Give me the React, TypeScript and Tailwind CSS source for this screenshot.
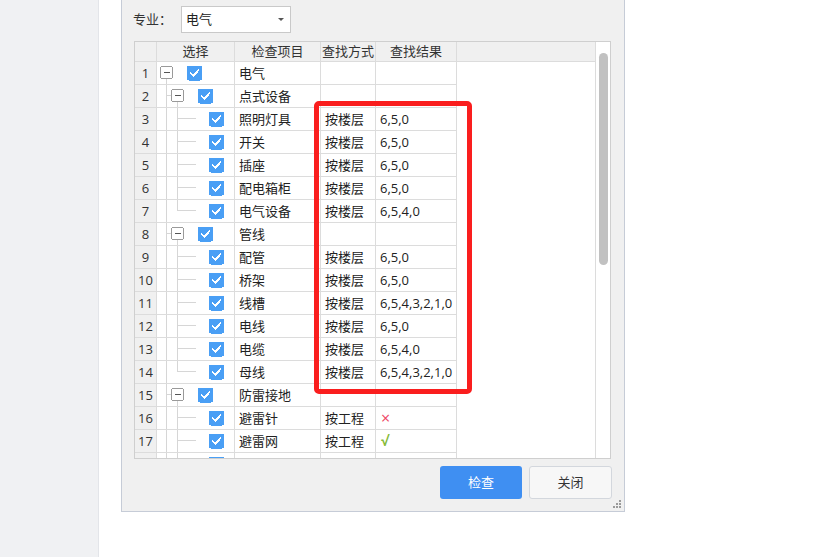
import React from "react";

type Row = {
  n: number;
  level: 0 | 1 | 2;
  name: string;
  method?: string;
  result?: string;
  last?: boolean;
};

const rows: Row[] = [
  { n: 1, level: 0, name: "电气" },
  { n: 2, level: 1, name: "点式设备" },
  { n: 3, level: 2, name: "照明灯具", method: "按楼层", result: "6,5,0" },
  { n: 4, level: 2, name: "开关", method: "按楼层", result: "6,5,0" },
  { n: 5, level: 2, name: "插座", method: "按楼层", result: "6,5,0" },
  { n: 6, level: 2, name: "配电箱柜", method: "按楼层", result: "6,5,0" },
  { n: 7, level: 2, name: "电气设备", method: "按楼层", result: "6,5,4,0", last: true },
  { n: 8, level: 1, name: "管线" },
  { n: 9, level: 2, name: "配管", method: "按楼层", result: "6,5,0" },
  { n: 10, level: 2, name: "桥架", method: "按楼层", result: "6,5,0" },
  { n: 11, level: 2, name: "线槽", method: "按楼层", result: "6,5,4,3,2,1,0" },
  { n: 12, level: 2, name: "电线", method: "按楼层", result: "6,5,0" },
  { n: 13, level: 2, name: "电缆", method: "按楼层", result: "6,5,4,0" },
  { n: 14, level: 2, name: "母线", method: "按楼层", result: "6,5,4,3,2,1,0", last: true },
  { n: 15, level: 1, name: "防雷接地" },
  { n: 16, level: 2, name: "避雷针", method: "按工程", result: "x" },
  { n: 17, level: 2, name: "避雷网", method: "按工程", result: "v" },
];

const LINE = "#d6d6d6";

function Expander({ x }: { x: number }) {
  return (
    <g>
      <rect x={x + 0.5} y={4.5} width={12} height={12} rx={2} fill="#fff" stroke="#9a9a9a" />
      <line x1={x + 4} y1={10.5} x2={x + 10} y2={10.5} stroke="#555" />
    </g>
  );
}

function Check({ x }: { x: number }) {
  return (
    <g>
      <rect x={x} y={3.5} width={15} height={15} rx={2} fill="#4a9ff5" />
      <path
        d={`M${x + 3.8} ${11.2} L${x + 6.6} ${13.8} L${x + 11.4} ${8.2}`}
        fill="none"
        stroke="#fff"
        strokeWidth={1.8}
        strokeLinecap="round"
        strokeLinejoin="round"
      />
    </g>
  );
}

// connectors, expander and checkbox of the 选择 column
function TreeCell({ level, last }: { level: 0 | 1 | 2; last?: boolean }) {
  return (
    <svg width="77" height="22" viewBox="0 0 77 22" shapeRendering="crispEdges">
      {level === 0 && (
        <>
          <line x1={9.5} y1={17} x2={9.5} y2={22} stroke={LINE} />
          <Expander x={3} />
          <Check x={30} />
        </>
      )}
      {level === 1 && (
        <>
          <line x1={9.5} y1={0} x2={9.5} y2={22} stroke={LINE} />
          <line x1={9.5} y1={10.5} x2={14} y2={10.5} stroke={LINE} />
          <line x1={20.5} y1={17} x2={20.5} y2={22} stroke={LINE} />
          <Expander x={14} />
          <Check x={41} />
        </>
      )}
      {level === 2 && (
        <>
          <line x1={9.5} y1={0} x2={9.5} y2={22} stroke={LINE} />
          <line x1={20.5} y1={0} x2={20.5} y2={last ? 11 : 22} stroke={LINE} />
          <line x1={20.5} y1={10.5} x2={39} y2={10.5} stroke={LINE} />
          <Check x={52} />
        </>
      )}
    </svg>
  );
}

function Result({ value }: { value?: string }) {
  if (value === "x") return <span className="text-[#ee4463] text-[16px] pl-[1px]">×</span>;
  if (value === "v") return <span className="text-[#86bb3a] text-[14px] font-bold pl-[1px]">√</span>;
  return <span>{value}</span>;
}

export default function App() {
  return (
    <div className="w-[815px] h-[557px] flex bg-white overflow-hidden font-['Open_Sans','Noto_Sans_CJK_SC',sans-serif] text-[13px] text-[#222]">
      {/* left strip */}
      <div className="w-[99px] h-full bg-[#f0f1f3] border-r border-[#e3e5e9]" />

      <div className="flex-1 pl-[22px]">
        {/* dialog */}
        <div className="relative w-[504px] h-[512px] bg-[#f0f0f0] border border-t-0 border-[#c6ccd7] flex flex-col">
          <div className="flex items-center h-[33px] pt-[6px] pl-[11px]">
            <span className="w-[48px] text-[#333]">专业：</span>
            <div className="w-[110px] h-[27px] bg-white border border-[#c9c9c9] flex items-center justify-between pl-[4px] pr-[6px]">
              <span>电气</span>
              <span className="w-0 h-0 border-l-[3px] border-r-[3px] border-t-[3px] border-l-transparent border-r-transparent border-t-[#555]" />
            </div>
          </div>

          {/* grid */}
          <div className="relative ml-[12px] mt-[8px] w-[477px] h-[418px] border border-[#cfcfcf] bg-white flex overflow-hidden">
            <div className="flex-1 flex flex-col">
              <div className="flex h-[20px] shrink-0 bg-[#f0f0f0] border-b border-[#dcdcdc] text-[#333] leading-[19px]">
                <div className="w-[22px] border-r border-[#dcdcdc]" />
                <div className="w-[78px] border-r border-[#dcdcdc] text-center">选择</div>
                <div className="w-[86px] border-r border-[#dcdcdc] text-center">检查项目</div>
                <div className="w-[55px] border-r border-[#dcdcdc] text-center whitespace-nowrap">查找方式</div>
                <div className="w-[81px] border-r border-[#dcdcdc] text-center">查找结果</div>
              </div>
              {rows.map((r) => (
                <div key={r.n} className="flex h-[23px] shrink-0 leading-[22px]">
                  <div className="w-[22px] border-r border-b border-[#dcdcdc] bg-[#f0f0f0] text-center text-[#333]">
                    {r.n}
                  </div>
                  <div className="w-[78px] border-r border-b border-[#dcdcdc]">
                    <TreeCell level={r.level} last={r.last} />
                  </div>
                  <div className="w-[86px] border-r border-b border-[#dcdcdc] pl-[4px]">{r.name}</div>
                  <div className="w-[55px] border-r border-b border-[#dcdcdc] pl-[4px] whitespace-nowrap">{r.method}</div>
                  <div className="w-[81px] border-r border-b border-[#dcdcdc] pl-[4px] whitespace-nowrap">
                    <Result value={r.result} />
                  </div>
                </div>
              ))}
              {/* next row, scrolled mostly out of view */}
              <div className="flex h-[23px] shrink-0">
                <div className="w-[22px] border-r border-[#dcdcdc] bg-[#f0f0f0]" />
                <div className="w-[78px] border-r border-[#dcdcdc]">
                  <TreeCell level={2} />
                </div>
                <div className="w-[86px] border-r border-[#dcdcdc]" />
                <div className="w-[55px] border-r border-[#dcdcdc]" />
                <div className="w-[81px] border-r border-[#dcdcdc]" />
              </div>
            </div>
            {/* scrollbar */}
            <div className="w-[15px] border-l border-[#dcdcdc] bg-white pt-[11px] pl-[3px]">
              <div className="w-[9px] h-[212px] rounded-full bg-[#c1c1c1]" />
            </div>

            {/* highlight frame */}
            <div className="absolute left-[179px] top-[59px] w-[158px] h-[293px] border-[5px] border-[#fa1e1e] rounded-[5px]" />
          </div>

          <div className="flex justify-end gap-[7px] mt-[7px] pr-[12px]">
            <button className="w-[82px] h-[33px] rounded-[3px] bg-[#3f8ff2] text-white">检查</button>
            <button className="w-[83px] h-[33px] rounded-[3px] bg-[#f7f7f7] border border-[#d3d7dd] text-[#333]">关闭</button>
          </div>

          {/* resize grip */}
          <svg className="absolute right-[2px] bottom-[2px]" width="10" height="10" viewBox="0 0 10 10">
            {[
              [7, 1], [4, 4], [7, 4], [1, 7], [4, 7], [7, 7],
            ].map(([x, y], i) => (
              <rect key={i} x={x} y={y} width={2} height={2} fill="#9a9a9a" />
            ))}
          </svg>
        </div>
      </div>
    </div>
  );
}
